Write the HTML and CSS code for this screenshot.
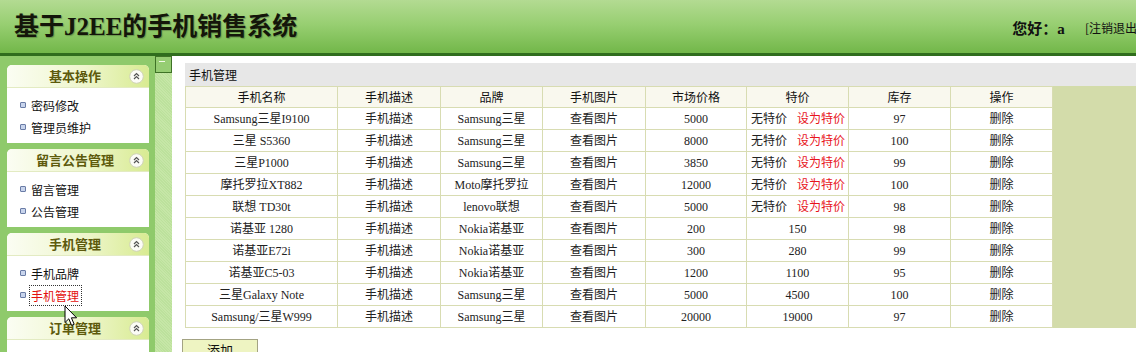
FILE: index.html
```html
<!DOCTYPE html>
<html lang="zh-CN">
<head>
<meta charset="utf-8">
<title>基于J2EE的手机销售系统</title>
<link rel="stylesheet" href="styles.css">
</head>
<body>
<div class="header">
  <h1 class="title">基于J2EE的手机销售系统</h1>
  <div class="user"><span class="hello">您好：a</span><span class="logout">[注销退出]</span></div>
</div>
<div class="main">
  <div class="sidebar">
    <div class="panel">
      <div class="panel-head"><span>基本操作</span>
        <svg class="fold" width="15" height="15" viewBox="0 0 15 15"><circle cx="7.5" cy="7.5" r="6.8" fill="#fcfcf6" stroke="#cfd2b8"/><polyline points="5,7 7.5,4.6 10,7" fill="none" stroke="#555" stroke-width="1.2"/><polyline points="5,10 7.5,7.6 10,10" fill="none" stroke="#555" stroke-width="1.2"/></svg>
      </div>
      <ul class="panel-body"><li><i class="dot"></i>密码修改</li><li><i class="dot"></i>管理员维护</li></ul>
    </div>
    <div class="panel">
      <div class="panel-head"><span>留言公告管理</span>
        <svg class="fold" width="15" height="15" viewBox="0 0 15 15"><circle cx="7.5" cy="7.5" r="6.8" fill="#fcfcf6" stroke="#cfd2b8"/><polyline points="5,7 7.5,4.6 10,7" fill="none" stroke="#555" stroke-width="1.2"/><polyline points="5,10 7.5,7.6 10,10" fill="none" stroke="#555" stroke-width="1.2"/></svg>
      </div>
      <ul class="panel-body"><li><i class="dot"></i>留言管理</li><li><i class="dot"></i>公告管理</li></ul>
    </div>
    <div class="panel">
      <div class="panel-head"><span>手机管理</span>
        <svg class="fold" width="15" height="15" viewBox="0 0 15 15"><circle cx="7.5" cy="7.5" r="6.8" fill="#fcfcf6" stroke="#cfd2b8"/><polyline points="5,7 7.5,4.6 10,7" fill="none" stroke="#555" stroke-width="1.2"/><polyline points="5,10 7.5,7.6 10,10" fill="none" stroke="#555" stroke-width="1.2"/></svg>
      </div>
      <ul class="panel-body"><li><i class="dot"></i>手机品牌</li><li><i class="dot"></i><span class="active">手机管理</span></li></ul>
    </div>
    <div class="panel">
      <div class="panel-head"><span>订单管理</span>
        <svg class="fold" width="15" height="15" viewBox="0 0 15 15"><circle cx="7.5" cy="7.5" r="6.8" fill="#fcfcf6" stroke="#cfd2b8"/><polyline points="5,7 7.5,4.6 10,7" fill="none" stroke="#555" stroke-width="1.2"/><polyline points="5,10 7.5,7.6 10,10" fill="none" stroke="#555" stroke-width="1.2"/></svg>
      </div>
      <ul class="panel-body"><li><i class="dot"></i>订单查询</li><li><i class="dot"></i>订单处理</li></ul>
    </div>
    <svg class="cursor" width="14" height="22" viewBox="0 0 14 22"><path d="M1 1 L1 17.5 L4.8 13.8 L7.6 20.4 L10.2 19.3 L7.4 12.8 L12.6 12.8 Z" fill="#fff" stroke="#000" stroke-width="1" stroke-linejoin="miter"/></svg>
  </div>
  <div class="splitter"><div class="toggle"><span class="dash"></span></div></div>
  <div class="content">
    <div class="box">
      <div class="box-title">手机管理</div>
      <div class="grid-wrap">
        <table class="grid">
          <colgroup><col class="c1"><col class="c2"><col class="c3"><col class="c4"><col class="c5"><col class="c6"><col class="c7"><col class="c8"></colgroup>
          <thead>
            <tr><th>手机名称</th><th>手机描述</th><th>品牌</th><th>手机图片</th><th>市场价格</th><th>特价</th><th>库存</th><th>操作</th></tr>
          </thead>
          <tbody>
            <tr><td>Samsung三星I9100</td><td>手机描述</td><td>Samsung三星</td><td>查看图片</td><td>5000</td><td class="sp">无特价<span class="set">设为特价</span></td><td>97</td><td>删除</td></tr>
            <tr><td>三星 S5360</td><td>手机描述</td><td>Samsung三星</td><td>查看图片</td><td>8000</td><td class="sp">无特价<span class="set">设为特价</span></td><td>100</td><td>删除</td></tr>
            <tr><td>三星P1000</td><td>手机描述</td><td>Samsung三星</td><td>查看图片</td><td>3850</td><td class="sp">无特价<span class="set">设为特价</span></td><td>99</td><td>删除</td></tr>
            <tr><td>摩托罗拉XT882</td><td>手机描述</td><td>Moto摩托罗拉</td><td>查看图片</td><td>12000</td><td class="sp">无特价<span class="set">设为特价</span></td><td>100</td><td>删除</td></tr>
            <tr><td>联想 TD30t</td><td>手机描述</td><td>lenovo联想</td><td>查看图片</td><td>5000</td><td class="sp">无特价<span class="set">设为特价</span></td><td>98</td><td>删除</td></tr>
            <tr><td>诺基亚 1280</td><td>手机描述</td><td>Nokia诺基亚</td><td>查看图片</td><td>200</td><td>150</td><td>98</td><td>删除</td></tr>
            <tr><td>诺基亚E72i</td><td>手机描述</td><td>Nokia诺基亚</td><td>查看图片</td><td>300</td><td>280</td><td>99</td><td>删除</td></tr>
            <tr><td>诺基亚C5-03</td><td>手机描述</td><td>Nokia诺基亚</td><td>查看图片</td><td>1200</td><td>1100</td><td>95</td><td>删除</td></tr>
            <tr><td>三星Galaxy Note</td><td>手机描述</td><td>Samsung三星</td><td>查看图片</td><td>5000</td><td>4500</td><td>100</td><td>删除</td></tr>
            <tr><td>Samsung/三星W999</td><td>手机描述</td><td>Samsung三星</td><td>查看图片</td><td>20000</td><td>19000</td><td>97</td><td>删除</td></tr>
          </tbody>
        </table>
        <div class="filler"></div>
      </div>
    </div>
    <button class="add" type="button">添加</button>
  </div>
</div>
</body>
</html>
```

FILE: styles.css
```css
html, body {
  margin: 0;
  padding: 0;
}
body {
  width: 1136px;
  height: 352px;
  overflow: hidden;
  background: #fff;
  font-family: "Noto Sans CJK SC", "Liberation Sans", sans-serif;
  font-size: 12px;
  color: #111;
}

/* header */
.header {
  height: 53px;
  border-bottom: 3px solid #2f6d1d;
  background: linear-gradient(#b3db92 0%, #98cf72 45%, #72b749 100%);
  display: flex;
  align-items: center;
  justify-content: space-between;
  padding-left: 14px;
}
.title {
  margin: 0;
  font-family: "Liberation Serif", "Noto Sans CJK SC", serif;
  font-weight: bold;
  font-size: 25px;
  line-height: 30px;
  color: #14160a;
  text-shadow: 1px 1px 1px rgba(0, 0, 0, 0.25);
}
.user {
  display: flex;
  align-items: center;
  margin-right: -5px;
  margin-top: 2px;
}
.hello {
  font-family: "Liberation Serif", "Noto Sans CJK SC", serif;
  font-weight: bold;
  font-size: 15px;
  color: #111;
}
.logout {
  margin-left: 20px;
  font-size: 12px;
  color: #111;
}

/* layout */
.main {
  display: flex;
  height: 296px;
}

/* sidebar */
.sidebar {
  position: relative;
  width: 142px;
  padding: 9px 6px 0 7px;
  background: #8fca6b;
  display: flex;
  flex-direction: column;
  gap: 6px;
}
.panel {
  flex-shrink: 0;
  background: #fff;
  border-radius: 5px 5px 0 0;
  overflow: hidden;
}
.panel-head {
  height: 22px;
  display: grid;
  grid-template-columns: 1fr 15px;
  align-items: center;
  padding: 0 5px 0 14px;
  background: linear-gradient(to right, #fbfdf3, #eef6cc 55%, #d8eb92);
  border-bottom: 1px solid #e3ebc2;
  font-weight: bold;
  font-size: 13px;
  color: #5d5a0c;
}
.panel-head span {
  text-align: center;
  line-height: 22px;
}
.fold {
  display: block;
}
.panel-body {
  list-style: none;
  margin: 0;
  padding: 6px 0 5px 13px;
}
.panel-body li {
  height: 22px;
  display: flex;
  align-items: center;
  gap: 5px;
  font-size: 12px;
  color: #111;
}
.dot {
  width: 4px;
  height: 4px;
  border: 1px solid #6a7ca6;
  background: #c8d4ec;
  border-radius: 1px;
}
.active {
  color: #e3100f;
  outline: 1px dotted #333;
  outline-offset: 1px;
  padding-right: 1px;
}
.cursor {
  position: absolute;
  left: 64px;
  top: 249px;
}

/* splitter */
.splitter {
  width: 17px;
  background: repeating-linear-gradient(45deg, #c6e6a7 0 1px, #bce19c 1px 2px);
}
.toggle {
  height: 17px;
  box-sizing: border-box;
  border: 1px solid #3e7226;
  background: #96cd73;
  padding: 4px 0 0 3px;
}
.dash {
  display: block;
  width: 6px;
  height: 1px;
  background: #f2fae8;
}

/* content */
.content {
  flex: 1;
  min-width: 0;
  padding: 7px 0 0 10px;
  background: #fff;
}
.box {
  margin-left: 3px;
}
.box-title {
  height: 23px;
  line-height: 23px;
  background: #e7e7e7;
  padding-left: 4px;
  font-size: 12px;
  color: #111;
}
.grid-wrap {
  display: flex;
}
.grid {
  flex-shrink: 0;
  width: 867px;
  border-collapse: collapse;
  table-layout: fixed;
}
.c1 { width: 152px; }
.c2 { width: 103px; }
.c3 { width: 102px; }
.c4 { width: 103px; }
.c5 { width: 101px; }
.c6 { width: 102px; }
.c7 { width: 102px; }
.c8 { width: 102px; }
.grid th,
.grid td {
  border: 1px solid #d8dcb2;
  padding: 0;
  height: 21px;
  line-height: 20px;
  text-align: center;
  font-weight: normal;
  font-family: "Liberation Serif", "Noto Sans CJK SC", serif;
  font-size: 12px;
  color: #222;
  white-space: nowrap;
  overflow: hidden;
}
.grid th {
  height: 20px;
  background: #f9f8ee;
  font-family: "Noto Sans CJK SC", sans-serif;
  color: #111;
}
.grid td.sp {
  text-align: left;
  padding-left: 4px;
}
.set {
  margin-left: 10px;
  color: #e8141c;
}
.filler {
  flex: 1;
  background: #d3dcaa;
}
.add {
  display: block;
  margin-top: 11px;
  width: 76px;
  height: 22px;
  padding: 0;
  border: 1px solid #a3a383;
  background: #eef4c2;
  font-family: "Noto Sans CJK SC", sans-serif;
  font-size: 13px;
  line-height: 18px;
  color: #111;
  text-align: center;
}
```
